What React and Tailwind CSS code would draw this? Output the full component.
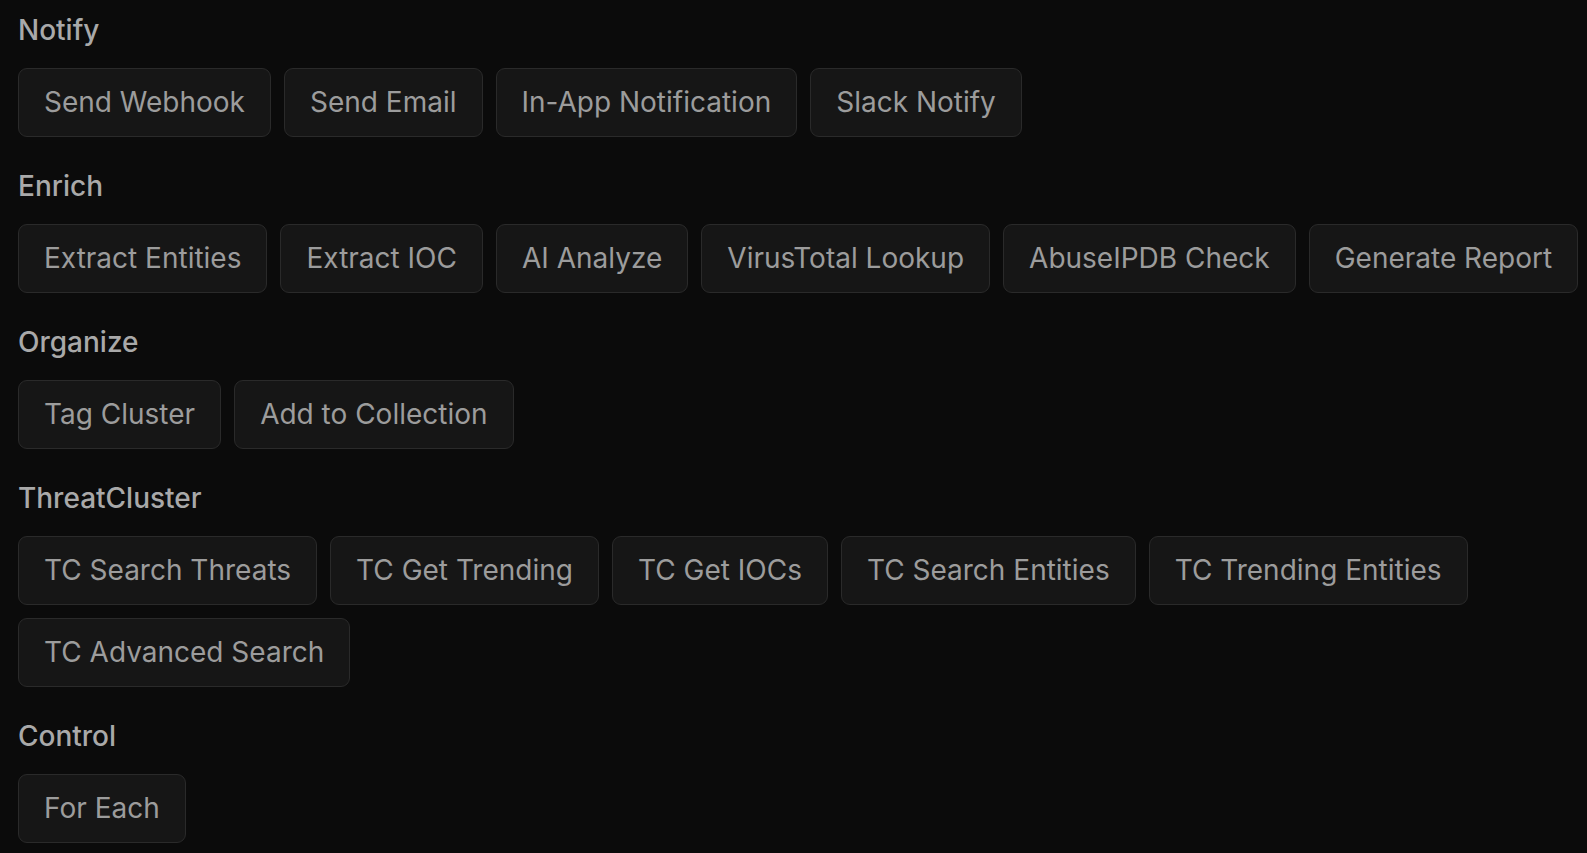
import React from 'react';

const groups = [
  { title: 'Notify', items: ['Send Webhook', 'Send Email', 'In-App Notification', 'Slack Notify'] },
  { title: 'Enrich', items: ['Extract Entities', 'Extract IOC', 'AI Analyze', 'VirusTotal Lookup', 'AbuseIPDB Check', 'Generate Report'] },
  { title: 'Organize', items: ['Tag Cluster', 'Add to Collection'] },
  { title: 'ThreatCluster', items: ['TC Search Threats', 'TC Get Trending', 'TC Get IOCs', 'TC Search Entities', 'TC Trending Entities', 'TC Advanced Search'] },
  { title: 'Control', items: ['For Each'] },
];

const App = () => {
  return (
    <div className="min-h-screen bg-[#0b0b0b] pl-[18px] pt-[12px] font-['Inter',sans-serif]">
      <div className="flex flex-col gap-[31px]">
        {groups.map(group => (
          <div key={group.title}>
            {/* Section label */}
            <div className="text-[28px] leading-[37px] font-medium text-[#a9a9a9] mb-[19px]">
              {group.title}
            </div>
            <div className="flex flex-wrap gap-[13px]">
              {group.items.map(item => (
                <button
                  key={item}
                  className="px-[25px] py-[15px] text-[28px] leading-[37px] text-[#9c9c9c] bg-[#161616] border border-[#2a2a2a] rounded-[9px]"
                >
                  {item}
                </button>
              ))}
            </div>
          </div>
        ))}
      </div>
    </div>
  );
};

export default App;
